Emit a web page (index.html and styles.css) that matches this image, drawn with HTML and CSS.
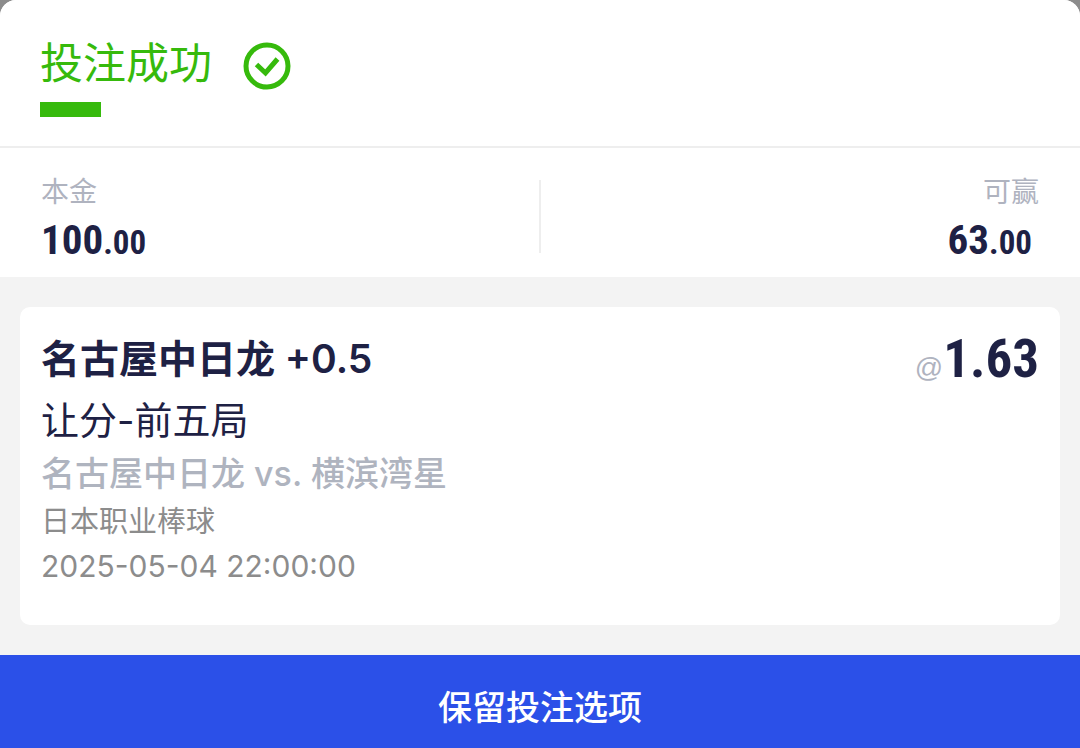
FILE: index.html
```html
<!DOCTYPE html>
<html lang="zh-CN">
<head>
<meta charset="utf-8">
<meta name="viewport" content="width=device-width, initial-scale=1">
<title>投注成功</title>
<link rel="stylesheet" href="styles.css">
</head>
<body>
<main class="sheet">
  <header class="header">
    <div class="heading">
      <h1 class="title">投注成功</h1>
      <svg class="check" viewBox="0 0 48 48" aria-hidden="true">
        <circle cx="24" cy="24" r="21" fill="none" stroke="currentColor" stroke-width="5"/>
        <path d="M13.500 22.500 22.500 31 34.500 17" fill="none" stroke="currentColor" stroke-width="5"/>
      </svg>
    </div>
    <div class="accent"></div>
  </header>
  <dl class="summary">
    <div class="stake">
      <dt class="label">本金</dt>
      <dd class="amount">100<span class="cents">.00</span></dd>
    </div>
    <div class="stake stake-win">
      <dt class="label">可赢</dt>
      <dd class="amount">63<span class="cents">.00</span></dd>
    </div>
  </dl>
  <section class="bets">
    <article class="card">
      <div class="pick-row">
        <h2 class="pick">名古屋中日龙 +0.5</h2>
        <p class="odds"><span class="at">@</span>1.63</p>
      </div>
      <p class="market">让分-前五局</p>
      <p class="match">名古屋中日龙 vs. 横滨湾星</p>
      <p class="detail">日本职业棒球</p>
      <p class="detail time"><time datetime="2025-05-04T22:00:00">2025-05-04 22:00:00</time></p>
    </article>
  </section>
  <button class="keep" type="button">保留投注选项</button>
</main>
</body>
</html>
```

FILE: styles.css
```css
* {
  box-sizing: border-box;
  margin: 0;
  padding: 0;
}

body {
  background: #8c8c8c;
  color: #1e2144;
  font-family: Inter, "Noto Sans CJK SC", sans-serif;
}

.sheet {
  display: flex;
  flex-direction: column;
  min-height: 100vh;
  overflow: hidden;
  border-radius: 16px 16px 0 0;
  background: #f3f3f3;
}

.header {
  padding: 35px 40px 29px;
  border-bottom: 2px solid #eeeeee;
  background: #fff;
  color: #36ba0c;
}

.heading {
  display: flex;
  align-items: center;
  gap: 31px;
}

.title {
  font-size: 43px;
  line-height: 56px;
  font-weight: 400;
}

.check {
  width: 48px;
  height: 48px;
  margin-top: 6px;
}

.accent {
  width: 61px;
  height: 15px;
  margin-top: 11px;
  background: currentColor;
}

.summary {
  display: flex;
  padding: 24px 41px;
  background: #fff;
}

.stake {
  flex: 1;
  height: 73px;
  margin-top: 8px;
  border-right: 2px solid #eeeeee;
}

.stake-win {
  border-right: 0;
  text-align: right;
}

.label {
  margin-top: -8px;
  font-size: 28px;
  line-height: 40px;
  color: #afb3bf;
}

.amount {
  font-family: "Roboto Condensed", Roboto, sans-serif;
  font-size: 41px;
  line-height: 56px;
  font-weight: 700;
}

.stake-win .amount {
  padding-right: 7px;
}

.cents {
  font-size: 33px;
}

.bets {
  flex: 1;
  padding: 30px 20px;
}

.card {
  padding: 24px 21px 36px;
  border-radius: 10px;
  background: #fff;
}

.pick-row {
  display: flex;
  justify-content: space-between;
  align-items: center;
}

.pick {
  font-size: 39px;
  line-height: 56px;
  font-weight: 600;
}

.odds {
  font-family: "Roboto Condensed", Roboto, sans-serif;
  font-size: 53px;
  line-height: 56px;
  font-weight: 700;
}

.at {
  font-family: "Liberation Sans", sans-serif;
  font-size: 28px;
  line-height: 28px;
  font-weight: 400;
  color: #afb3bf;
}

.market {
  font-size: 38px;
  line-height: 66px;
}

.match {
  margin-bottom: 4px;
  font-size: 34px;
  line-height: 42px;
  font-weight: 500;
  color: #afb4bf;
}

.detail {
  font-size: 29px;
  line-height: 45px;
  color: #8c8c8c;
}

.time {
  font-size: 30px;
}

.keep {
  padding: 30px 24px 18px;
  border: 0;
  background: #2b50e8;
  color: #fff;
  font-family: inherit;
  font-size: 34px;
  line-height: 45px;
  font-weight: 500;
}
```
